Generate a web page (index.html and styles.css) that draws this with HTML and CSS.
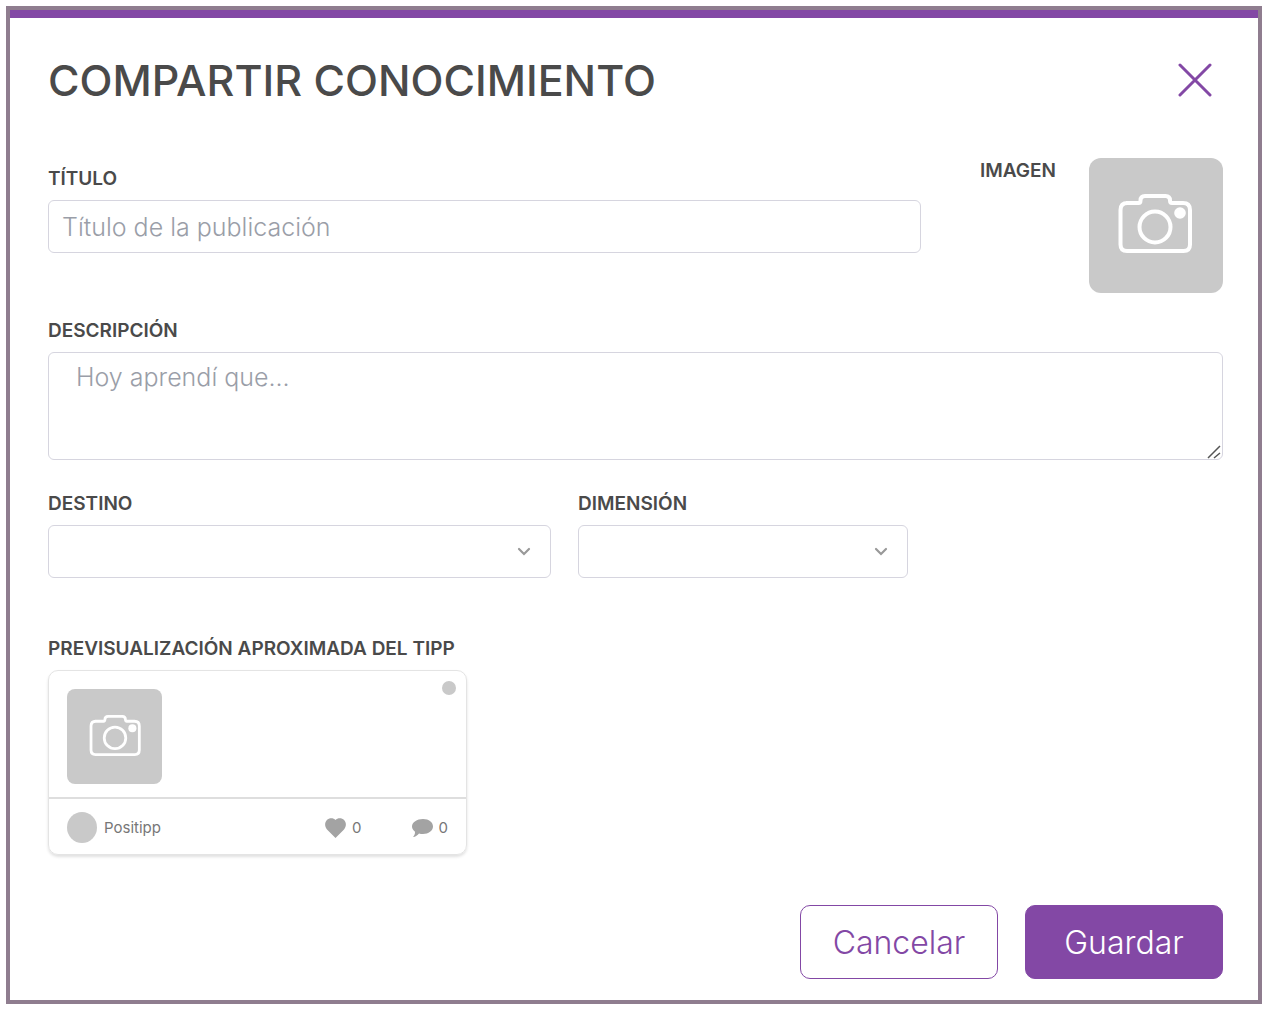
FILE: index.html
```html
<!DOCTYPE html>
<html lang="es">
<head>
<meta charset="utf-8">
<meta name="viewport" content="width=device-width, initial-scale=1">
<title>Compartir conocimiento</title>
<link rel="stylesheet" href="styles.css">
</head>
<body>
<svg class="sprite" aria-hidden="true">
  <symbol id="camera" viewBox="0 0 74 59">
    <path d="M8 9H20.500Q22.500 9 22.500 6.500Q22.500 2 27 2H47.500Q52 2 52 6.500Q52 9 54 9H65Q72 9 72 16V50.500Q72 57 65.500 57H9Q2.500 57 2.500 50.500V16Q2.500 9 9.500 9" fill="none" stroke="#fff"/>
    <circle cx="37" cy="33" r="15.500" fill="none" stroke="#fff"/>
    <circle cx="62" cy="19" r="5.800" fill="#fff" stroke="none"/>
  </symbol>
  <symbol id="chevron" viewBox="0 0 14 10">
    <path d="M2 2L7 7L12 2" fill="none" stroke="#999" stroke-width="2.200" stroke-linecap="round"/>
  </symbol>
</svg>
<main class="dialog">
  <header class="dialog-header">
    <h1 class="title">COMPARTIR CONOCIMIENTO</h1>
    <button class="close" type="button" aria-label="Cerrar">
      <svg width="34" height="34" viewBox="0 0 34 34" aria-hidden="true"><path d="M2 2L32 32M32 2L2 32" fill="none" stroke="#8348a5" stroke-width="3" stroke-linecap="round"/></svg>
    </button>
  </header>
  <form class="form">
    <div class="top-row">
      <div class="field title-field">
        <label class="label" for="titulo">TÍTULO</label>
        <input class="control" id="titulo" type="text" placeholder="Título de la publicación">
      </div>
      <div class="image-field">
        <label class="label" for="imagen">IMAGEN</label>
        <button class="picture" id="imagen" type="button">
          <svg class="camera" aria-hidden="true"><use href="#camera"/></svg>
        </button>
      </div>
    </div>
    <div class="field description">
      <label class="label" for="descripcion">DESCRIPCIÓN</label>
      <div class="control-wrap">
        <textarea class="control area" id="descripcion" placeholder="Hoy aprendí que..."></textarea>
        <svg class="grip" viewBox="0 0 14 14" aria-hidden="true"><path d="M1 13L13 1M7 13L13 8" fill="none" stroke="#555" stroke-width="1.500"/></svg>
      </div>
    </div>
    <div class="selects">
      <div class="field">
        <label class="label" for="destino">DESTINO</label>
        <div class="control-wrap">
          <select class="control" id="destino"><option></option></select>
          <svg class="chevron" aria-hidden="true"><use href="#chevron"/></svg>
        </div>
      </div>
      <div class="field">
        <label class="label" for="dimension">DIMENSIÓN</label>
        <div class="control-wrap">
          <select class="control" id="dimension"><option></option></select>
          <svg class="chevron" aria-hidden="true"><use href="#chevron"/></svg>
        </div>
      </div>
    </div>
    <section class="field preview">
      <h2 class="label">PREVISUALIZACIÓN APROXIMADA DEL TIPP</h2>
      <article class="card">
        <div class="card-body">
          <div class="thumb"><svg class="camera" aria-hidden="true"><use href="#camera"/></svg></div>
          <span class="dot"></span>
        </div>
        <footer class="card-footer">
          <span class="avatar"></span>
          <span class="author">Positipp</span>
          <span class="count">
            <svg width="21" height="20" viewBox="0 0 21 20" aria-hidden="true"><path d="M10.500 20L2 11.500C-0.500 8.800 -0.400 4.500 1.700 2.300C4.500 -0.600 8.500 0 10.500 2C12.500 0 16.500 -0.600 19.300 2.300C21.400 4.500 21.500 8.800 19 11.500Z" fill="#a3a3a3"/></svg>
            0
          </span>
          <span class="count">
            <svg width="21" height="20" viewBox="0 0 21 20" aria-hidden="true"><path d="M11 1C17 1 21 4.300 21 8.500C21 12.800 16.500 16 11 16C9.500 16 8.300 15.800 7 15.400C5.500 17.300 3.800 18.600 1 19C2.500 17.500 3.100 15.500 3 13.700C1.200 12.300 0 10.500 0 8.500C0 4.300 5 1 11 1Z" fill="#a3a3a3"/></svg>
            0
          </span>
        </footer>
      </article>
    </section>
    <div class="actions">
      <button class="button secondary" type="button">Cancelar</button>
      <button class="button primary" type="submit">Guardar</button>
    </div>
  </form>
</main>
</body>
</html>
```
FILE: styles.css
```css
*, *::before, *::after { box-sizing: border-box; }

body {
  margin: 6px 8px 12px 6px;
  background: #fff;
  color: #4a4a4a;
  font-family: Inter, "Open Sans", sans-serif;
}

button, input, select, textarea { font: inherit; }

.sprite { display: none; }

.dialog {
  min-height: calc(100vh - 18px);
  border: 4px solid #8f7d8f;
  background: #fff;
}

.dialog-header {
  display: flex;
  align-items: center;
  justify-content: space-between;
  border-top: 8px solid #8348a5;
  padding: 34px 35px 0 38px;
}

.title {
  margin: 0;
  font-size: 43px;
  line-height: 56px;
  font-weight: 500;
}

.close {
  display: grid;
  place-items: center;
  width: 56px;
  height: 56px;
  padding: 0;
  border: 0;
  background: none;
}

.form { padding: 50px 35px 21px 38px; }

.label {
  display: block;
  margin: 0 0 8px;
  font-size: 19px;
  line-height: 26px;
  font-weight: 600;
}

.control {
  display: block;
  width: 100%;
  height: 53px;
  padding: 0 13px;
  border: 1px solid #d6d5df;
  border-radius: 6px;
  background: #fff;
  color: #4a4a4a;
  font-size: 25px;
  font-weight: 300;
  appearance: none;
}

.control::placeholder { color: #9a9ea8; opacity: 1; }

.control-wrap { position: relative; }

.top-row {
  display: flex;
  gap: 59px;
}

.title-field { flex: 1; padding-top: 8px; }

.image-field {
  display: flex;
  justify-content: space-between;
  width: 243px;
}

.picture, .thumb {
  display: grid;
  place-items: center;
  padding: 0 2px 4px 0;
  border: 0;
  background: #c9c9c9;
}

.picture {
  width: 134px;
  height: 135px;
  border-radius: 12px;
}

.camera {
  width: 74px;
  height: 59px;
  stroke-width: 4px;
}

.description { margin-top: 25px; }

.area {
  height: 108px;
  padding: 8px 27px;
  line-height: 32px;
  resize: vertical;
}

.area::-webkit-resizer { background: transparent; }

.grip {
  position: absolute;
  right: 2px;
  bottom: 1px;
  width: 14px;
  height: 14px;
  pointer-events: none;
}

.selects {
  display: grid;
  grid-template-columns: minmax(0, 503px) minmax(0, 330px);
  gap: 27px;
  margin-top: 31px;
}

.chevron {
  position: absolute;
  right: 20px;
  top: 22px;
  width: 14px;
  height: 10px;
  pointer-events: none;
}

.preview { margin-top: 58px; }

.card {
  max-width: 419px;
  border: 1px solid #e4e4e4;
  border-radius: 10px;
  box-shadow: 0 2px 3px #0000001f;
}

.card-body {
  display: flex;
  justify-content: space-between;
  padding: 18px 10px 13px 18px;
  border-bottom: 2px solid #dedede;
}

.thumb {
  width: 95px;
  height: 95px;
  padding: 0 0 2px;
  border-radius: 8px;
}

.thumb .camera { width: 52px; height: 41px; }

.dot {
  width: 14px;
  height: 14px;
  margin-top: -8px;
  border-radius: 50%;
  background: #c9c9c9;
}

.card-footer {
  display: flex;
  align-items: center;
  height: 55px;
  padding: 2px 18px 0;
  color: #777;
  font-size: 15px;
}

.avatar {
  width: 30px;
  height: 31px;
  margin-right: 7px;
  border-radius: 50%;
  background: #c9c9c9;
}

.author { flex: 1; }

.count {
  display: flex;
  align-items: center;
  gap: 6px;
}

.count + .count { margin-left: 50px; }

.actions {
  display: flex;
  justify-content: flex-end;
  gap: 27px;
  margin-top: 50px;
}

.button {
  width: 198px;
  height: 74px;
  padding: 0;
  border: 1px solid #8348a5;
  border-radius: 10px;
  font-size: 32px;
  font-weight: 300;
}

.secondary { background: #fff; color: #8348a5; }

.primary { background: #8348a5; color: #fff; }
```
